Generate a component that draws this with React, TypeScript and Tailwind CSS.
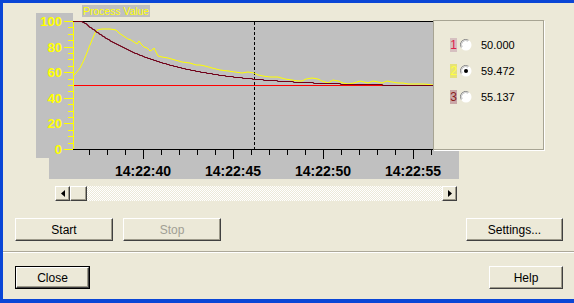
import React from "react";

const FONT = { fontFamily: '"Liberation Sans", Arial, sans-serif' };

// value -> screen y inside the chart (0 at y=149, 100 at y=21)
const toY = (v: number): number => 149 - v * 1.28;

const YELLOW_POINTS: readonly [number, number][] = [
  [73, 76], [76, 73], [80, 68], [84, 60], [88, 50], [92, 40], [95, 33], [97, 30],
  [102, 29], [110, 29], [116, 30], [119, 33], [122, 35], [125, 37], [128, 39],
  [131, 40], [134, 42], [137, 44], [139, 41], [141, 44], [144, 47], [147, 48],
  [150, 51], [152, 50], [154, 48], [156, 52], [158, 56], [162, 57], [168, 58],
  [175, 60], [182, 62], [190, 63], [196, 65], [200, 65], [205, 66], [212, 68],
  [220, 70], [228, 71], [235, 72], [242, 73], [248, 72], [254, 73], [258, 75],
  [263, 76], [270, 77], [278, 77], [285, 79], [292, 80], [298, 81], [302, 81],
  [306, 79], [312, 78], [318, 79], [322, 81], [328, 83], [333, 80], [338, 81],
  [343, 83], [348, 84], [354, 83], [360, 81], [364, 82], [368, 83], [373, 81],
  [378, 82], [382, 83], [387, 81], [392, 82], [398, 83], [403, 83], [408, 84],
  [413, 84], [418, 84], [424, 84], [433, 85],
];

function maroonPoints(): string {
  const pts: string[] = [];
  for (let x = 73; x <= 433; x++) {
    const d = x - 84;
    const v = d <= 0 ? 100 - Math.max(0, x - 80) * 0.15 : 49.3 + 50.1 * Math.exp(-d / 78);
    pts.push(`${x},${Math.round(toY(v)) + 0.5}`);
  }
  return pts.join(" ");
}

function Chart(): React.JSX.Element {
  const yTicks: number[] = [];
  for (let v = 0; v <= 100; v += 5) yTicks.push(v);
  const xTicks: number[] = [];
  for (let k = 0; k <= 19; k++) xTicks.push(89 + k * 18);

  return (
    <svg width={423} height={174} viewBox="36 5 423 174" className="shrink-0 block" style={FONT}>
      <rect x={82} y={5} width={68} height={12} fill="#c0c0c0" />
      <text x={83} y={15} fontSize={11} fill="#ffff00" textLength={66} lengthAdjust="spacingAndGlyphs">
        Process Value
      </text>
      <rect x={36} y={13} width={37} height={145} fill="#c0c0c0" />
      <rect x={49} y={149} width={410} height={30} fill="#c0c0c0" />
      <rect x={73} y={21} width={360} height={128} fill="#c0c0c0" />

      <g shapeRendering="crispEdges">
        <line x1={73} y1={21.5} x2={433} y2={21.5} stroke="#000" />
        <line x1={73.5} y1={21} x2={73.5} y2={150} stroke="#ffff00" />
        {yTicks.map((v) => (
          <line
            key={v}
            x1={v % 20 === 0 ? 64 : 68}
            x2={73}
            y1={Math.round(toY(v)) + 0.5}
            y2={Math.round(toY(v)) + 0.5}
            stroke="#ffff00"
          />
        ))}
        <line x1={254.5} y1={22} x2={254.5} y2={149} stroke="#000" strokeDasharray="3 2" />
      </g>
      <rect x={74} y={85} width={359} height={1} fill="#ff0000" />

      {[0, 20, 40, 60, 80, 100].map((v) => (
        <text
          key={v}
          x={62}
          y={toY(v) + 5}
          textAnchor="end"
          fontSize={13}
          fontWeight="bold"
          fill="#ffff00"
        >
          {v}
        </text>
      ))}

      <polyline
        points={YELLOW_POINTS.map(([x, y]) => `${x},${y}`).join(" ")}
        fill="none"
        stroke="#ffff00"
        strokeWidth={1}
      />
      <polyline points={maroonPoints()} fill="none" stroke="#700018" strokeWidth={1.2} />

      <g shapeRendering="crispEdges">
        <line x1={73} y1={149.5} x2={434} y2={149.5} stroke="#000" />
        {xTicks.map((x, k) => (
          <line
            key={x}
            x1={x + 0.5}
            x2={x + 0.5}
            y1={150}
            y2={k % 5 === 3 ? 159 : 155}
            stroke="#000"
          />
        ))}
      </g>
      {["14:22:40", "14:22:45", "14:22:50", "14:22:55"].map((t, i) => (
        <text
          key={t}
          x={143 + i * 90}
          y={176}
          textAnchor="middle"
          fontSize={14}
          fontWeight="bold"
          fill="#000"
        >
          {t}
        </text>
      ))}
    </svg>
  );
}

function Radio({ checked }: { readonly checked?: boolean }): React.JSX.Element {
  return (
    <svg width={12} height={12} viewBox="0 0 12 12" className="block">
      <circle cx={6} cy={6} r={5.5} fill="#ffffff" />
      <path d="M1.2 8.5 A5.3 5.3 0 0 1 8.5 1.2" fill="none" stroke="#8a8a8a" strokeWidth={1} />
      <path d="M2.2 8 A4.2 4.2 0 0 1 8 2.2" fill="none" stroke="#c8c8c8" strokeWidth={1} />
      {checked ? <circle cx={6} cy={6} r={2} fill="#000" /> : null}
    </svg>
  );
}

const LEGEND = [
  { n: "1", value: "50.000", bg: "bg-[#d6c0c0]", fg: "text-[#e0204a]", checked: false },
  { n: "2", value: "59.472", bg: "bg-[#e6e27a]", fg: "text-[#ffff40]", checked: true },
  { n: "3", value: "55.137", bg: "bg-[#caa8a8]", fg: "text-[#8a1c1c]", checked: false },
] as const;

function Legend(): React.JSX.Element {
  return (
    <div className="ml-[-26px] mt-[15px] flex h-[130px] w-[111px] shrink-0 flex-col gap-[12px] border border-[#a7a493] pl-[16px] pt-[17px] shadow-[1px_1px_0_#ffffff]">
      {LEGEND.map((row) => (
        <div key={row.n} className="flex h-[14px] items-center">
          <span className={`h-[14px] w-[7px] text-center text-[12px] leading-[14px] ${row.bg} ${row.fg}`}>
            {row.n}
          </span>
          <span className="ml-[3px]">
            <Radio checked={row.checked} />
          </span>
          <span className="ml-[9px] text-[11px] leading-[14px] text-black">{row.value}</span>
        </div>
      ))}
    </div>
  );
}

const BEVEL =
  "border border-t-white border-l-white border-r-[#404040] border-b-[#404040] bg-[#ece9d8] shadow-[inset_-1px_-1px_0_#9d9a8a]";

function ArrowButton({ dir }: { readonly dir: "left" | "right" }): React.JSX.Element {
  return (
    <div className={`flex h-[15px] w-[15px] shrink-0 items-center justify-center ${BEVEL}`}>
      <svg width={4} height={7} viewBox="0 0 4 7">
        {dir === "left" ? <path d="M4 0 L0 3.5 L4 7 Z" fill="#000" /> : <path d="M0 0 L4 3.5 L0 7 Z" fill="#000" />}
      </svg>
    </div>
  );
}

function ScrollBar(): React.JSX.Element {
  return (
    <div className="ml-[52px] mt-[7px] flex h-[15px] w-[402px] bg-[repeating-conic-gradient(#ffffff_0_25%,#ece9d8_0_50%)] bg-[length:2px_2px]">
      <ArrowButton dir="left" />
      <div className={`h-[15px] w-[17px] shrink-0 ${BEVEL}`} />
      <div className="flex-1" />
      <ArrowButton dir="right" />
    </div>
  );
}

interface ButtonProps {
  readonly label: string;
  readonly width: string;
  readonly disabled?: boolean;
  readonly isDefault?: boolean;
}

function Button({ label, width, disabled, isDefault }: ButtonProps): React.JSX.Element {
  const inner = (
    <div
      className={`flex h-full w-full items-center justify-center text-[12px] ${BEVEL} ${
        disabled ? "text-[#a19f94]" : "text-black"
      }`}
    >
      {label}
    </div>
  );
  if (isDefault) {
    return <div className={`h-[23px] shrink-0 border border-black ${width}`}>{inner}</div>;
  }
  return <div className={`h-[23px] shrink-0 ${width}`}>{inner}</div>;
}

export default function App(): React.JSX.Element {
  return (
    <div
      className="h-[303px] w-[574px] overflow-hidden border-b-[4px] border-l-[3px] border-t-[3px] border-[#0a46d6] bg-[#ece9d8]"
      style={FONT}
    >
      <div className="flex flex-col">
        {/* ── Chart with legend ── */}
        <div className="ml-[33px] mt-[2px] flex items-start">
          <Chart />
          <Legend />
        </div>

        <ScrollBar />

        {/* ── Start / Stop / Settings ── */}
        <div className="mt-[17px] flex pl-[12px] pr-[11px]">
          <Button label="Start" width="w-[98px]" />
          <div className="ml-[10px]">
            <Button label="Stop" width="w-[98px]" disabled />
          </div>
          <div className="flex-1" />
          <Button label="Settings..." width="w-[97px]" />
        </div>

        {/* ── Separator ── */}
        <div className="mt-[10px] h-[2px] border-t border-b border-t-[#aca899] border-b-white" />

        {/* ── Close / Help ── */}
        <div className="mt-[13px] flex pl-[12px] pr-[11px]">
          <Button label="Close" width="w-[75px]" isDefault />
          <div className="flex-1" />
          <Button label="Help" width="w-[74px]" />
        </div>
      </div>
    </div>
  );
}
